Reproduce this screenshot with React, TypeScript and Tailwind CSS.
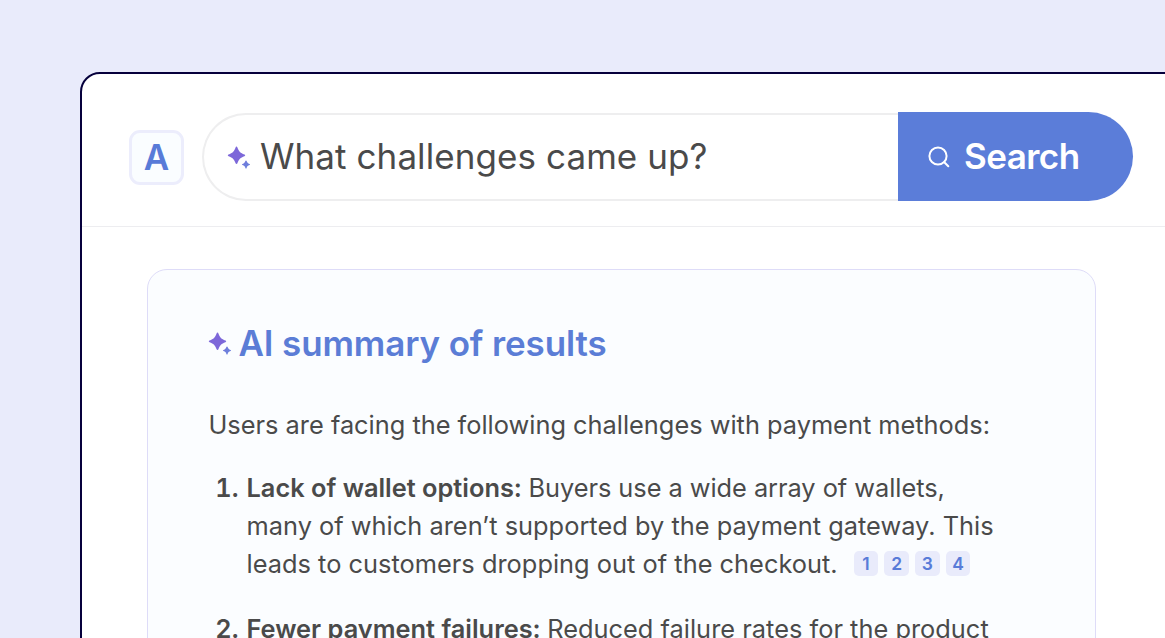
import { useId } from "react"

const challenges = [
  {
    title: "Lack of wallet options:",
    lines: [
      "Buyers use a wide array of wallets,",
      "many of which aren’t supported by the payment gateway. This",
      "leads to customers dropping out of the checkout.",
    ],
    sources: [1, 2, 3, 4],
  },
  {
    title: "Fewer payment failures:",
    lines: ["Reduced failure rates for the product"],
    sources: [],
  },
]

function Sparkles({ className }: { className?: string }) {
  const id = useId()

  return (
    <svg viewBox="0 0 24 24" fill="none" className={className}>
      <defs>
        <linearGradient id={id} x1="4" y1="4" x2="23" y2="22" gradientUnits="userSpaceOnUse">
          <stop offset="0.45" stopColor="#7d67d9" />
          <stop offset="0.8" stopColor="#6d80dc" />
        </linearGradient>
      </defs>
      <g fill={`url(#${id})`}>
        <path d="M9.500 .6c.5 0 .7.3.9.8C11.800 5.300 13.500 7 17.400 8.400c.5.200.8.500.8.900s-.3.700-.8.900C13.500 11.600 11.800 13.300 10.400 17.200c-.2.500-.4.800-.9.800s-.7-.3-.9-.800C7.200 13.300 5.500 11.600 1.600 10.200c-.5-.2-.8-.5-.8-.9s.3-.7.800-.9C5.500 7 7.200 5.300 8.600 1.400c.2-.5.400-.8.900-.8Z" />
        <path d="M19 14.500c.4 0 .5.2.6.5.6 1.700 1.200 2.300 2.900 2.900.4.1.6.3.6.600s-.2.500-.6.600c-1.700.6-2.300 1.200-2.900 2.900-.1.300-.2.600-.6.600s-.5-.3-.6-.600c-.6-1.700-1.200-2.300-2.900-2.900-.4-.1-.6-.3-.6-.600s.2-.5.600-.600c1.700-.6 2.300-1.200 2.900-2.900.1-.3.200-.5.600-.5Z" />
      </g>
    </svg>
  )
}

function SearchIcon() {
  return (
    <svg viewBox="0 0 22 22" fill="none" stroke="white" strokeWidth="2" strokeLinecap="round" className="h-[22px] w-[22px]">
      <circle cx="10" cy="10" r="8.600" />
      <path d="m16.300 16.300 4 4" />
    </svg>
  )
}

function SearchBar() {
  return (
    <header className="flex h-[153px] items-start border-b border-[#ededf0] pl-[47px] pt-[38px]">
      <div className="mt-[18px] flex h-[55px] w-[55px] shrink-0 items-center justify-center rounded-[11px] border-[3px] border-[#ecedfc] bg-[#fafdff] text-[35px] font-semibold text-[#587bd8]">
        A
      </div>
      <div className="ml-[18px] mt-px flex h-[88px] w-[696px] shrink-0 items-center rounded-l-full border-2 border-r-0 border-[#eeeeef] pl-[23px]">
        <Sparkles className="mt-px h-6 w-6 shrink-0" />
        <span className="ml-[9px] whitespace-nowrap pb-px text-[35px] tracking-[0.08px] text-[#4a4a4a]">
          What challenges came up?
        </span>
      </div>
      <button className="mt-[0.400px] flex h-[89px] w-[235px] shrink-0 items-center rounded-r-full bg-[#5b7dd9] pl-[30px]">
        <SearchIcon />
        <span className="ml-[14px] pb-px text-[35px] font-semibold tracking-[-0.55px] text-white">Search</span>
      </button>
    </header>
  )
}

function Summary() {
  return (
    <section className="ml-[65px] mt-[42px] h-[460px] w-[949px] rounded-[20px] border-[1.5px] border-[#dedcf8] bg-[#fbfdff] pl-[60.500px] pt-[47px] text-[25.360px] leading-[38px] text-[#4a4a4a]">
      <h2 className="flex h-[54px] items-center whitespace-nowrap pb-0.5 text-[35px] font-semibold tracking-[-0.13px] text-[#5b7dd6]">
        <Sparkles className="-ml-px mr-[7px] mt-0.5 h-6 w-6 shrink-0" />
        AI summary of results
      </h2>
      <p className="mt-[35px] whitespace-nowrap">Users are facing the following challenges with payment methods:</p>
      <ol className="mt-[25px] flex flex-col gap-[27px]">
        {challenges.map((challenge, index) => (
          <li key={challenge.title} className="flex">
            <span className="w-[38px] shrink-0 pr-[8px] text-right font-semibold tabular-nums">{index + 1}.</span>
            <div className="whitespace-nowrap">
              {challenge.lines.map((line, i) => (
                <div key={line} className="flex h-[38px] items-center">
                  {i === 0 && <strong className="mr-[6.500px] font-semibold">{challenge.title}</strong>}
                  <span className={index === 0 && i === 0 ? "tracking-[-0.04px]" : "tracking-[0.02px]"}>{line}</span>
                  {i === 2 && (
                    <span className="mb-px ml-4 flex gap-[6px]">
                      {challenge.sources.map((source) => (
                        <span
                          key={source}
                          className="flex h-[25px] w-[24.700px] items-center justify-center rounded-[5px] bg-[#e9ebfb] text-[17.500px] font-semibold text-[#587bd8]"
                        >
                          {source}
                        </span>
                      ))}
                    </span>
                  )}
                </div>
              ))}
            </div>
          </li>
        ))}
      </ol>
    </section>
  )
}

export default function App() {
  return (
    <main className="h-[638px] w-[1165px] overflow-hidden bg-[#e9ebfb] pl-20 pt-[72px] font-['Inter',sans-serif]">
      <div className="h-[700px] w-[1200px] overflow-hidden rounded-tl-[20px] border-2 border-[#06003c] bg-white">
        <SearchBar />
        <Summary />
      </div>
    </main>
  )
}
